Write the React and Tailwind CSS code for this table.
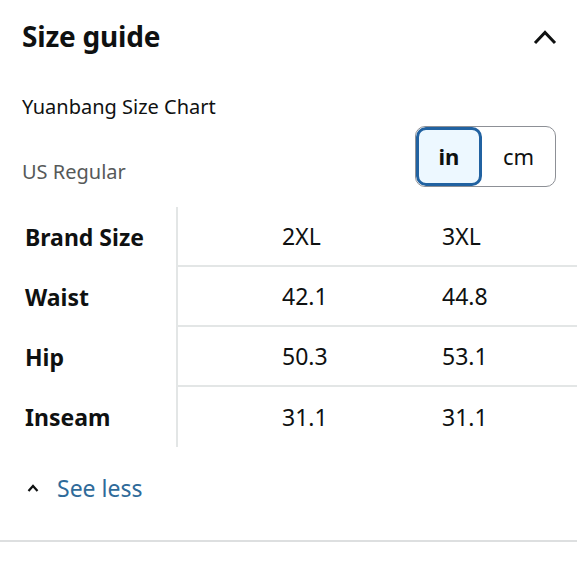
import React from "react";

const rows = [
  ["Brand Size", "2XL", "3XL"],
  ["Waist", "42.1", "44.8"],
  ["Hip", "50.3", "53.1"],
  ["Inseam", "31.1", "31.1"],
];

export default function App() {
  return (
    <div
      className="w-[577px] h-[580px] bg-white text-[#0f1111] overflow-hidden"
      style={{ fontFamily: '"Noto Sans", "Open Sans", Arial, sans-serif' }}
    >
      <div className="flex items-center justify-between pl-[22px] pr-[20px] h-[72px]">
        <h2 className="text-[28px] font-bold leading-none tracking-[-0.2px]">Size guide</h2>
        <svg width="24" height="16" viewBox="0 0 24 16" fill="none" className="mt-[2px]">
          <path d="M2 14 L12 3.5 L22 14" stroke="#0f1111" strokeWidth="3" />
        </svg>
      </div>

      <div className="pl-[22px] pt-[25px] text-[20px] leading-none">Yuanbang Size Chart</div>

      <div className="flex items-center justify-between pl-[22px] pr-[21px] mt-[9px]">
        <div className="text-[20px] text-[#565959] leading-none mt-[30px]">US Regular</div>
        <div className="flex h-[61px] w-[141px] rounded-[10px] border border-[#8d9096] overflow-hidden">
          <div className="w-[66px] flex items-center justify-center bg-[#edf8ff] border-[3px] border-[#2162a1] rounded-[10px] text-[22px] font-bold">
            in
          </div>
          <div className="flex-1 flex items-center justify-center text-[22px]">cm</div>
        </div>
      </div>

      <div className="mt-[20px]">
        {rows.map((r, i) => (
          <div key={i} className="flex h-[60px]">
            <div className="w-[178px] border-r-2 border-[#e3e6e6] flex items-center pl-[25px] text-[23px] font-bold">
              {r[0]}
            </div>
            <div
              className={`flex-1 flex items-center text-[23px] ${
                i < rows.length - 1 ? "border-b-2 border-[#e3e6e6]" : ""
              }`}
            >
              <span className="w-[161px] pl-[104px]">{r[1]}</span>
              <span className="pl-[103px]">{r[2]}</span>
            </div>
          </div>
        ))}
      </div>

      <div className="flex items-center pl-[27px] mt-[28px] h-[26px]">
        <svg width="12" height="8" viewBox="0 0 12 8" fill="none">
          <path d="M1.5 7 L6 2 L10.5 7" stroke="#0f1111" strokeWidth="2.2" />
        </svg>
        <span className="ml-[18px] text-[23px] text-[#2f6b9a] leading-none">See less</span>
      </div>

      <div className="mt-[39px] border-t-2 border-[#dddfe0]" />
    </div>
  );
}
